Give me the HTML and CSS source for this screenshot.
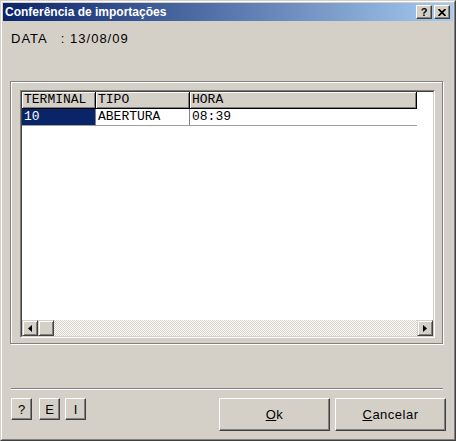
FILE: index.html
```html
<!DOCTYPE html>
<html>
<head>
<meta charset="utf-8">
<link rel="stylesheet" href="styles.css">
</head>
<body>
<div class="window">
  <div class="frame">
    <div class="titlebar">
      <span class="title">Conferência de importações</span>
      <div class="caption-buttons">
        <div class="cap-btn help">?</div>
        <div class="cap-btn close">
          <svg width="8" height="7" viewBox="0 0 8 7"><path d="M0.5 0 L7.5 7 M7.5 0 L0.5 7" stroke="#000" stroke-width="1.7"/></svg>
        </div>
      </div>
    </div>
    <div class="client">
      <div class="data-line">DATA   : 13/08/09</div>
      <div class="groupbox">
        <div class="grid">
          <div class="grid-inner">
            <div class="grid-body">
              <div class="row header">
                <div class="cell c1">TERMINAL</div>
                <div class="cell c2">TIPO</div>
                <div class="cell c3">HORA</div>
              </div>
              <div class="row data">
                <div class="cell c1 selected">10</div>
                <div class="cell c2">ABERTURA</div>
                <div class="cell c3">08:39</div>
              </div>
            </div>
            <div class="hscroll">
              <div class="sb-btn"><svg width="4" height="7" viewBox="0 0 4 7"><path d="M4 0 L0 3.5 L4 7 Z" fill="#000"/></svg></div>
              <div class="sb-btn"></div>
              <div class="track"></div>
              <div class="sb-btn"><svg width="4" height="7" viewBox="0 0 4 7"><path d="M0 0 L4 3.5 L0 7 Z" fill="#000"/></svg></div>
            </div>
          </div>
        </div>
      </div>
      <div class="separator"></div>
      <div class="button-row">
        <div class="small-buttons">
          <button class="btn small b-help">?</button>
          <button class="btn small b-e">E</button>
          <button class="btn small b-i">I</button>
        </div>
        <div class="main-buttons">
          <button class="btn big"><u>O</u>k</button>
          <button class="btn big"><u>C</u>ancelar</button>
        </div>
      </div>
    </div>
  </div>
</div>
</body>
</html>
```
FILE: styles.css
```css
* { box-sizing: border-box; }
html, body { margin: 0; padding: 0; }
body {
  width: 456px;
  height: 441px;
  background: #d4d0c8;
  font-family: "Liberation Sans", Arial, sans-serif;
  font-size: 13px;
  color: #000;
  overflow: hidden;
}
.window {
  width: 456px;
  height: 441px;
  border: 1px solid;
  border-color: #d4d0c8 #404040 #404040 #d4d0c8;
}
.frame {
  height: 100%;
  border: 1px solid;
  border-color: #fff #808080 #808080 #fff;
  padding: 1px;
  display: flex;
  flex-direction: column;
}
.titlebar {
  height: 18px;
  flex: none;
  display: flex;
  align-items: center;
  justify-content: space-between;
  padding: 0 3px 0 2px;
  background: linear-gradient(to right, #0a246a, #a6caf0);
}
.title {
  color: #fff;
  font-weight: bold;
  font-size: 12px;
  line-height: 16px;
}
.caption-buttons {
  display: flex;
  gap: 2px;
}
.cap-btn {
  width: 16px;
  height: 14px;
  border: 1px solid;
  border-color: #fff #404040 #404040 #fff;
  box-shadow: inset -1px -1px #808080;
  background: #d4d0c8;
  display: flex;
  align-items: center;
  justify-content: center;
}
.cap-btn.help {
  font-weight: bold;
  font-size: 11px;
  line-height: 11px;
  padding-left: 0;
}
.cap-btn.close svg { display: block; }
.client {
  flex: 1;
  display: flex;
  flex-direction: column;
}
.data-line {
  margin: 10px 0 0 8px;
  height: 15px;
  line-height: 15px;
  letter-spacing: 1px;
  white-space: pre;
}
.groupbox {
  margin: 35px 0 0 7px;
  width: 433px;
  height: 263px;
  border: 1px solid #808080;
  box-shadow: 1px 1px #fff, inset 1px 1px #fff;
  padding: 8px 7px 5px 9px;
  display: flex;
}
.grid {
  flex: 1;
  display: flex;
  border: 1px solid;
  border-color: #808080 #fff #fff #808080;
}
.grid-inner {
  flex: 1;
  display: flex;
  flex-direction: column;
  border: 1px solid;
  border-color: #404040 #d4d0c8 #d4d0c8 #404040;
  background: #fff;
}
.grid-body {
  flex: 1;
}
.row {
  display: flex;
  height: 17px;
  font-family: "Liberation Mono", "Courier New", monospace;
  font-size: 13px;
}
.cell {
  padding-left: 2px;
  line-height: 16px;
  white-space: pre;
}
.c1 { width: 74px; }
.c2 { width: 94px; }
.c3 { width: 227px; }
.header .cell {
  background: #d4d0c8;
  border-right: 1px solid #000;
  border-bottom: 1px solid #000;
  box-shadow: inset 1px 1px #fff, inset -1px -1px #808080;
}
.data .cell {
  border-bottom: 1px solid #a0a0a0;
  border-right: 1px solid #808080;
}
.data .c3 { border-right: none; }
.data .selected {
  background: #0a246a;
  color: #fff;
}
.hscroll {
  height: 16px;
  display: flex;
  flex: none;
}
.sb-btn {
  width: 16px;
  height: 16px;
  flex: none;
  border: 1px solid;
  border-color: #d4d0c8 #404040 #404040 #d4d0c8;
  box-shadow: inset 1px 1px #fff, inset -1px -1px #808080;
  background: #d4d0c8;
  display: flex;
  align-items: center;
  justify-content: center;
}
.sb-btn svg { display: block; }
.track {
  flex: 1;
  background: repeating-conic-gradient(#fff 0 25%, #d4d0c8 0 50%) 0 0 / 2px 2px;
}
.separator {
  margin: 44px 0 0 8px;
  width: 432px;
  height: 2px;
  border-top: 1px solid #808080;
  border-bottom: 1px solid #fff;
}
.button-row {
  margin-top: 8px;
  padding: 0 7px 0 8px;
  display: flex;
  justify-content: space-between;
  align-items: flex-start;
}
.small-buttons {
  display: flex;
}
.main-buttons {
  display: flex;
  gap: 5px;
}
.btn {
  font: inherit;
  color: #000;
  margin: 0;
  padding: 0;
  background: #d4d0c8;
  border: 1px solid;
  border-color: #fff #404040 #404040 #fff;
  box-shadow: inset -1px -1px #808080;
  display: flex;
  align-items: center;
  justify-content: center;
}
.btn.small {
  width: 21px;
  height: 22px;
}
.b-help { margin-right: 7px; }
.b-e { margin-right: 5px; }
.btn.big {
  width: 111px;
  height: 33px;
  letter-spacing: 0.5px;
}
```
